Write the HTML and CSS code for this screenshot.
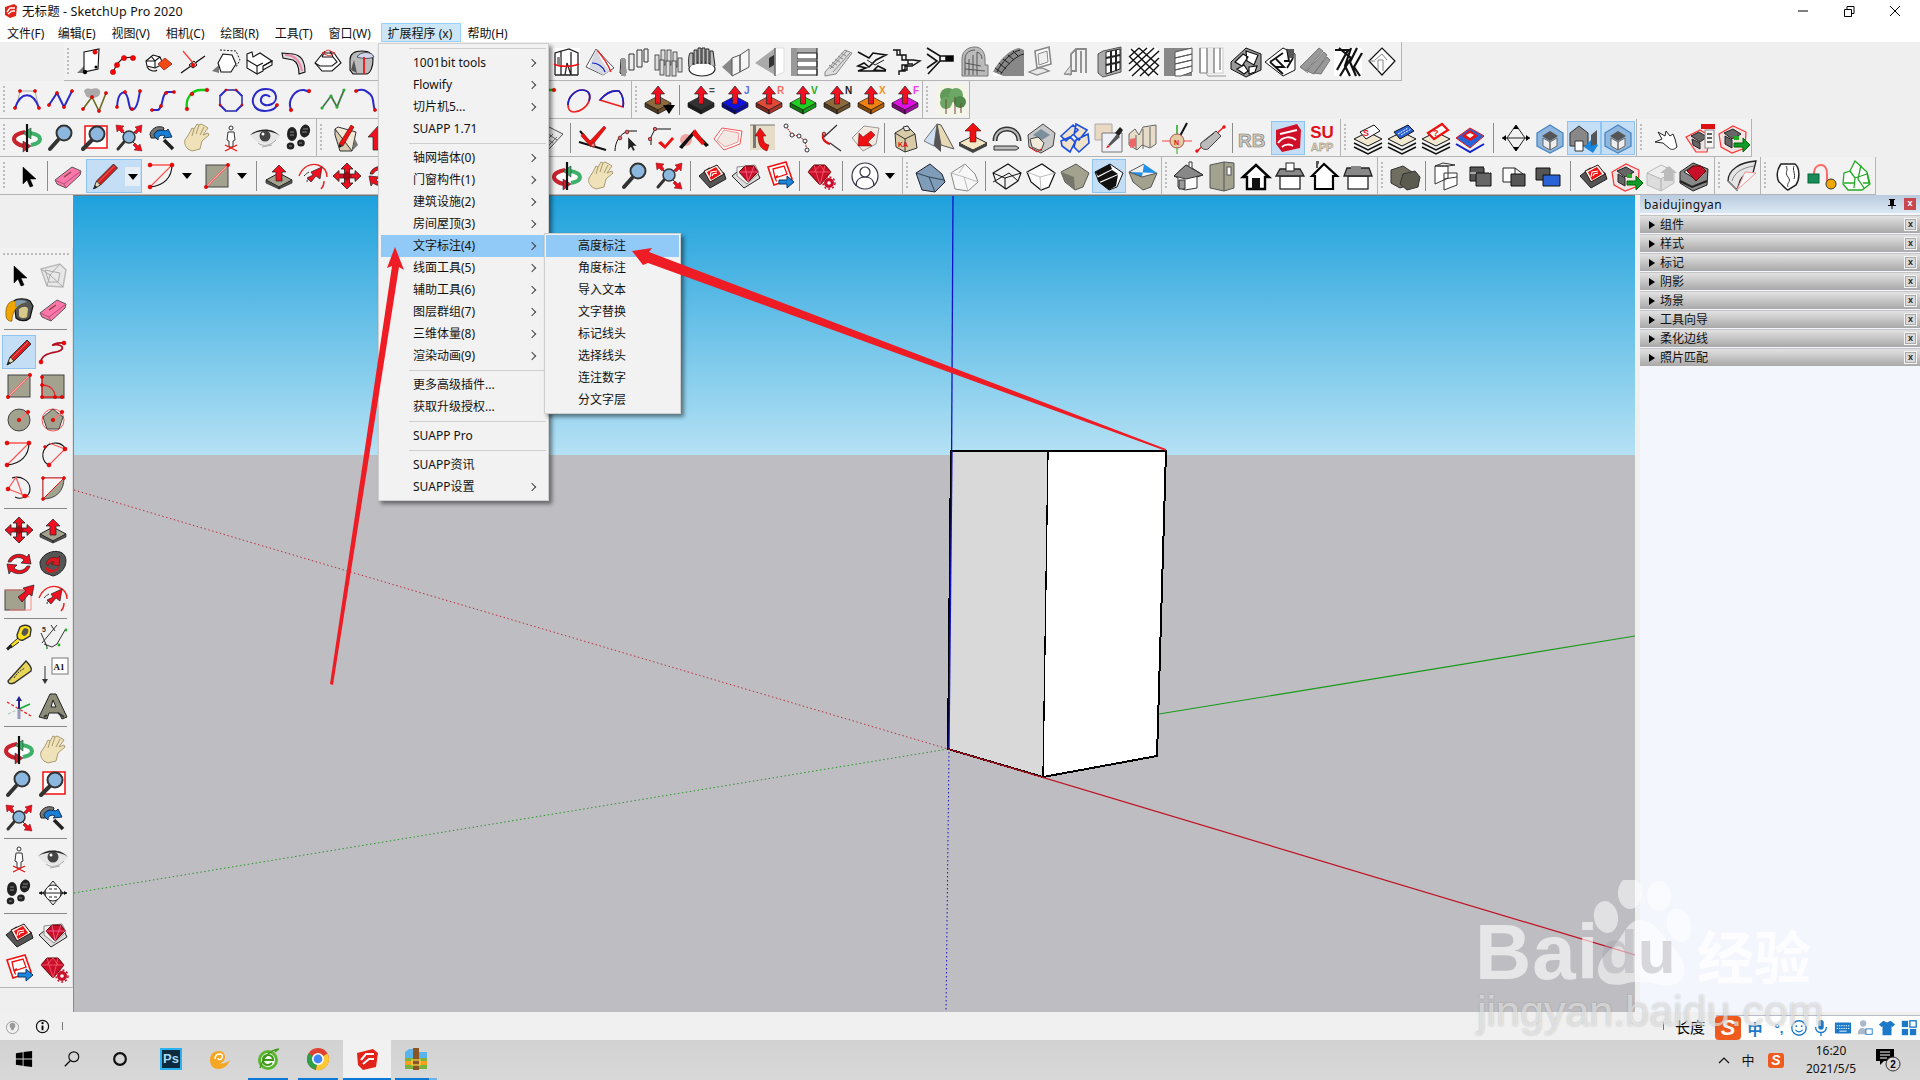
FILE: index.html
```html
<!DOCTYPE html>
<html lang="zh-CN">
<head>
<meta charset="utf-8">
<title>无标题 - SketchUp Pro 2020</title>
<link rel="stylesheet" href="styles.css">
</head>
<body>
<svg class="defs" xmlns="http://www.w3.org/2000/svg">
<!-- row 1 -->
<symbol id="a1" viewBox="0 0 34 34"><path d="M4 28l7-7v7z" fill="#777"/><path d="M11 7l15-3-1 20-14 3z" fill="#fff" class="k"/><circle class="d" cx="22" cy="7" r="2.2"/><circle cx="23" cy="22" r="1.5"/><circle cx="12" cy="27" r="2.2"/></symbol>
<symbol id="a2" viewBox="0 0 34 34"><path d="M6 27l4-8 6-6 10-1" class="k"/><circle class="d" cx="6" cy="27" r="2.6"/><circle class="d" cx="10" cy="20" r="2.6"/><circle class="d" cx="17" cy="13" r="2.6"/><circle class="d" cx="26" cy="13" r="2.6"/></symbol>
<symbol id="a3" viewBox="0 0 34 34"><path d="M5 16l7-6 7 2 3 7-8 4-8-2z" fill="#fff" class="k"/><path d="M10 11l4 5 5-4M5 16l9 0 0 7" class="k"/><path d="M17 19l7-6 7 6-8 6z" fill="#f04a10" stroke="#a33"/><path d="M6 22c2 4 8 5 10 3" class="k"/></symbol>
<symbol id="a4" viewBox="0 0 34 34"><path d="M8 6l10 12" stroke="#f33" stroke-width="1.2"/><path d="M6 28l24-17" stroke="#111" stroke-width="1.3"/><path d="M14 20l5-4 3 4-4 3z" fill="#fff" stroke="#111"/><circle class="d" cx="18" cy="20" r="2"/></symbol>
<symbol id="a5" viewBox="0 0 34 34"><path d="M3 26l7-6v8z" fill="#777"/><path d="M11 5l16 1 4 9-4 7" class="kd"/><path d="M14 9l9 1 4 9-5 8-10 0-3-9z" fill="#fff" class="k"/></symbol>
<symbol id="a6" viewBox="0 0 34 34"><path d="M4 9l5-2 1 5 7-4 12 8-9 5v5l-6 3-10-6z" fill="#fff" class="k"/><path d="M4 15l10 6 6-3M14 21v7M20 21l9-5v4l-9 5" class="k"/></symbol>
<symbol id="a7" viewBox="0 0 34 34"><path d="M5 8l11 1c8 1 12 8 12 18l-6 2c0-7-2-12-6-14L6 13z" fill="#ddd" class="k"/><path d="M8 10c9 0 15 5 17 16" fill="none" stroke="#e8a" stroke-width="2"/></symbol>
<symbol id="a8" viewBox="0 0 34 34"><path d="M4 18l8-10h11l7 10-9 8H11z" fill="#fff" class="k"/><path d="M11 12h11l4 5-5 4H9l-5-3M11 12l3-6M22 12l-3-6" class="k"/><path d="M11 8l6-3 7 3-6 3z" fill="none" stroke="#e33"/></symbol>
<symbol id="a9" viewBox="0 0 34 34"><path d="M5 25V15c0-7 5-9 12-9 8 0 11 4 11 9s-2 14-7 14H8z" fill="#bbb" class="k"/><path d="M12 12c3-6 15-6 17 0-5 2-11 2-17 0z" fill="#cfd6f0" stroke="#555"/><path d="M19 12v17" stroke="#e22" stroke-width="2"/><path d="M9 15l-3 10 6 3z" fill="#555"/></symbol>
<symbol id="b1" viewBox="0 0 34 34"><path d="M6 25L10 8H25L29 25" fill="none" stroke="#aaa"/><path d="M5 25C11 8 23 8 29 25" class="bl"/><circle class="d" cx="5" cy="25" r="1.6"/><circle class="d" cx="10" cy="8" r="1.6"/><circle class="d" cx="25" cy="8" r="1.6"/><circle class="d" cx="29" cy="25" r="1.6"/></symbol>
<symbol id="b2" viewBox="0 0 34 34"><path d="M5 22l8-12 7 14 8-16" class="bl"/><circle class="d" cx="5" cy="22" r="1.6"/><circle class="d" cx="13" cy="10" r="1.6"/><circle class="d" cx="20" cy="24" r="1.6"/><circle class="d" cx="28" cy="8" r="1.6"/></symbol>
<symbol id="b3" viewBox="0 0 34 34"><path d="M6 8c2-4 6-2 8-2 4-2 9 0 8 4 0 6-12 6-14 3z" fill="#aaa"/><path d="M5 26l9-12 7 14 7-18" fill="none" stroke="#6a6a20" stroke-width="1.6"/><circle class="d" cx="5" cy="26" r="1.6"/><circle class="d" cx="14" cy="14" r="1.6"/><circle class="d" cx="21" cy="28" r="1.6"/><circle class="d" cx="28" cy="10" r="1.6"/></symbol>
<symbol id="b4" viewBox="0 0 34 34"><path d="M5 24c1-17 9-18 11-8s2 12 6 10 5-13 6-18" class="bl"/><circle class="d" cx="5" cy="24" r="1.6"/><circle class="d" cx="13" cy="9" r="1.6"/><circle class="d" cx="20" cy="26" r="1.6"/><circle class="d" cx="28" cy="8" r="1.6"/></symbol>
<symbol id="b5" viewBox="0 0 34 34"><path d="M6 27h6c6-3 3-16 9-18h7" class="bl"/><circle class="d" cx="6" cy="27" r="1.6"/><circle class="d" cx="15" cy="23" r="1.6"/><circle class="d" cx="20" cy="10" r="1.6"/><circle class="d" cx="28" cy="9" r="1.6"/></symbol>
<symbol id="b6" viewBox="0 0 34 34"><path d="M7 26C5 15 12 7 21 7h7" fill="none" stroke="#1c1" stroke-width="2.4"/><circle class="d" cx="7" cy="26" r="1.8"/><circle class="d" cx="12" cy="11" r="1.8"/><circle class="d" cx="27" cy="7" r="1.8"/></symbol>
<symbol id="b7" viewBox="0 0 34 34"><path d="M12 7h10l6 6v9l-6 6H12l-6-6v-9z" class="bl"/><path d="M12 7h10M12 28h10M6 13v9M28 13v9" fill="none" stroke="#88a" stroke-width="1"/><circle class="d" cx="12" cy="7" r="1.1"/><circle class="d" cx="22" cy="7" r="1.1"/><circle class="d" cx="6" cy="22" r="1.1"/><circle class="d" cx="28" cy="22" r="1.1"/></symbol>
<symbol id="b8" viewBox="0 0 34 34"><path d="M29 22c-3 7-17 8-22 2S6 6 18 6s12 12 6 15-12 0-11-5 7-5 9-2" class="bl"/><circle class="d" cx="29" cy="22" r="1.6"/></symbol>
<symbol id="b9" viewBox="0 0 34 34"><path d="M9 27C5 17 13 6 22 7l6 2" class="bl"/><circle class="d" cx="9" cy="27" r="1.8"/><circle class="d" cx="27" cy="8" r="1.8"/></symbol>
<symbol id="b10" viewBox="0 0 34 34"><path d="M6 25l9-12 6 11 7-17" fill="none" stroke="#4a8" stroke-width="2"/><path d="M6 25l9-12 6 11 7-17" fill="none" stroke="#640" stroke-width=".8"/><circle cx="6" cy="25" r="1.6" fill="#3a3"/><circle cx="15" cy="13" r="1.6" fill="#3a3"/><circle cx="21" cy="24" r="1.6" fill="#3a3"/><circle cx="28" cy="7" r="1.6" fill="#3a3"/></symbol>
<symbol id="b11" viewBox="0 0 34 34"><path d="M6 8c8-3 10 0 14 3 5 5 2 10 5 16" class="bl"/><circle class="d" cx="6" cy="8" r="1.6"/><circle class="d" cx="25" cy="27" r="1.6"/></symbol>
<symbol id="b12" viewBox="0 0 34 34"><path d="M7 22c0-8 7-15 14-15s9 5 7 11-9 11-15 11c-4 0-6-3-6-7z" fill="none" stroke="#e22" stroke-width="1.7"/><path d="M7 22c0-8 7-15 14-15s9 5 7 11" fill="none" stroke="#12c" stroke-width="1.7"/></symbol>
<symbol id="b13" viewBox="0 0 34 34"><path d="M5 17C10 11 17 7 24 8c4 4 5 11 4 16z" fill="none" stroke="#e22" stroke-width="1.7"/><path d="M5 17C10 11 17 7 24 8c4 4 5 11 4 16" fill="none" stroke="#12c" stroke-width="1.7"/></symbol>
<!-- push pull family -->
<symbol id="ppb" viewBox="0 0 34 34"><path d="M4 20l13-7 13 7-13 7z" fill="currentColor" stroke="#222" stroke-width=".7"/><path d="M4 20v4l13 7v-4zM30 20v4l-13 7v-4z" fill="currentColor" stroke="#222" stroke-width=".7"/><path d="M4 20v4l13 7v-4z" fill="#000" opacity=".45"/><path d="M30 20v4l-13 7v-4z" fill="#000" opacity=".25"/><path d="M14.500 21v-10h-4L17 3l6.500 8h-4v10z" fill="#f01020" stroke="#222" stroke-width=".7"/></symbol>
<symbol id="pt" viewBox="0 0 34 34"><g color="#8d6a3b"><use href="#ppb"/></g><path d="M22 22h12l-6 9z"/></symbol>
<symbol id="p0" viewBox="0 0 34 34"><g color="#333"><use href="#ppb"/></g><text x="25" y="11" class="tl" fill="#444">=</text></symbol>
<symbol id="pj" viewBox="0 0 34 34"><g color="#1010e0"><use href="#ppb"/></g><text x="26" y="11" class="tl" fill="#5a6cf0">J</text></symbol>
<symbol id="pr" viewBox="0 0 34 34"><g color="#e04838"><use href="#ppb"/></g><text x="25" y="11" class="tl" fill="#f07060">R</text></symbol>
<symbol id="pv" viewBox="0 0 34 34"><g color="#20d020"><use href="#ppb"/></g><text x="25" y="11" class="tl" fill="#22aa22">V</text></symbol>
<symbol id="pn" viewBox="0 0 34 34"><g color="#8d6a3b"><use href="#ppb"/></g><text x="25" y="11" class="tl" fill="#222">N</text></symbol>
<symbol id="px" viewBox="0 0 34 34"><g color="#f08010"><use href="#ppb"/></g><text x="25" y="11" class="tl" fill="#f09020">X</text></symbol>
<symbol id="pf" viewBox="0 0 34 34"><g color="#e010e0"><use href="#ppb"/></g><text x="25" y="11" class="tl" fill="#f040f0">F</text></symbol>
<symbol id="tr" viewBox="0 0 34 34"><rect x="1" y="1" width="32" height="32" fill="#f4f4e8"/><circle cx="13" cy="13" r="8" fill="#5f9a58"/><circle cx="21" cy="12" r="7" fill="#6da765"/><circle cx="25" cy="19" r="6" fill="#4f8a4a"/><circle cx="11" cy="20" r="6" fill="#6da765"/><path d="M11 31V16M20 31V14M26 30V20" stroke="#6b4a30"/></symbol>
<!-- common tools -->
<symbol id="sel" viewBox="0 0 34 34"><path d="M12 8v17l4-4 3 7 3-1-3-7h6z" stroke="#000" stroke-width=".5"/></symbol>
<symbol id="era" viewBox="0 0 34 34"><path d="M4 21L21 8l9 4-1 4-14 13-9-4z" fill="#f7a" stroke="#555"/><path d="M4 21l9 4 17-13M13 25l2 4" fill="none" stroke="#a57"/><path d="M13 18l7-5" stroke="#844" stroke-width="1.5"/></symbol>
<symbol id="pen" viewBox="0 0 34 34"><path d="M25 5l4 4-17 17-4-4z" fill="#d81e1e" stroke="#333"/><path d="M8 22l-3 8 7-4z" fill="#e8d9b0" stroke="#333"/><path d="M5 30l1.500-4 2.500 2.500z" fill="#222"/><path d="M9 24L26 7" stroke="#fff" opacity=".35"/></symbol>
<symbol id="ar" viewBox="0 0 34 34"><path d="M5 6h22L5 28" fill="none" stroke="#f55" stroke-width="1.3"/><path d="M27 6c0 12-8 21-22 22" class="k"/><circle class="d" cx="5" cy="6" r="2"/><circle class="d" cx="27" cy="6" r="2"/><circle class="d" cx="5" cy="28" r="2"/></symbol>
<symbol id="re" viewBox="0 0 34 34"><rect x="6" y="6" width="22" height="22" class="tan"/><path d="M6 28L28 6" stroke="#f66" stroke-width="1.800"/><path d="M6 28L28 6" stroke="#fdd" stroke-width=".6"/><circle class="d" cx="6" cy="28" r="1.700"/><circle class="d" cx="28" cy="6" r="1.700"/></symbol>
<symbol id="pp" viewBox="0 0 34 34"><path d="M4 21l13-7 13 7-13 7z" fill="#a3a28f" stroke="#222"/><path d="M4 21v3l13 6v-2zM30 21v3l-13 6v-2z" fill="#555" stroke="#222" stroke-width=".7"/><path d="M14 22v-9h-4l7-7 7 7h-4v9z" fill="#f01020" stroke="#222" stroke-width=".7"/></symbol>
<symbol id="fo" viewBox="0 0 34 34"><path d="M3 17C7 7 15 4 22 6c6 2 9 7 9 12" fill="none" stroke="#e22" stroke-width="1.400"/><path d="M28 22c0 3-1 6-3 8" fill="none" stroke="#e22" stroke-width="1.400"/><path d="M11 19l6-3-2-3 11-5-2 12-4-3-5 6z" fill="#f01020" stroke="#222" stroke-width=".7"/><path d="M8 17c2-2 3-3 5-4M11 23c0-2 1-3 2-3" fill="none" stroke="#333"/></symbol>
<symbol id="mo" viewBox="0 0 34 34"><path d="M17 4l6 6h-3.500v5H25v-3.500l6 5.500-6 5.500V19h-5.500v5H23l-6 6-6-6h3.500v-5H9v3.500L3 17l6-5.500V15h5.500v-5H11z" fill="#ec1020" stroke="#222" stroke-width=".8"/><path d="M17 12l5 5-5 5-5-5z" fill="#400" opacity=".45"/></symbol>
<symbol id="ro" viewBox="0 0 34 34"><g id="ro1"><path d="M6 15C8 7 19 5 25 10l2-3 2 10-10-1 3-3c-4-4-10-3-13 2z" fill="#ec1020" stroke="#222" stroke-width=".7"/></g><use href="#ro1" transform="rotate(180 17 17)"/></symbol>
<symbol id="sc" viewBox="0 0 34 34"><rect x="3" y="9" width="20" height="20" class="tan"/><path d="M3 9h20v2M29 13v16H8" fill="none" stroke="#f88"/><path d="M16 16l8-6-3-3 11-3-2 11-3-2-7 8z" fill="#ec1020" stroke="#222" stroke-width=".7"/></symbol>
<symbol id="ob" viewBox="0 0 34 34"><ellipse cx="17" cy="17" rx="10" ry="6" fill="#fff"/><path d="M15 11C8 12 4 15 4 18s4 6 10 7" fill="none" stroke="#c8222c" stroke-width="4"/><path d="M13 20l8 5-8 6z" fill="#c8222c" stroke="#222" stroke-width=".5"/><path d="M20 12c6 1 10 3 10 6 0 3-3 5-9 6" fill="none" stroke="#3fb06a" stroke-width="4"/><path d="M21 7l-8 5 8 6z" fill="#3fb06a" stroke="#222" stroke-width=".5"/><path d="M17 3v28" stroke="#111" stroke-width="2.200"/></symbol>
<symbol id="ha" viewBox="0 0 34 34"><path d="M8 28c-3-3-4-6-3-9l4-6 3-6 2 1 3-5 2 1 2-1 4 2 3 2-5 7 5-2 1 2-7 6-2 8-8 2z" fill="#f0e2b8" stroke="#a99a70"/><path d="M14 8l-2 7M19 4l-3 9M24 6l-4 8" stroke="#a99a70"/></symbol>
<symbol id="zo" viewBox="0 0 34 34"><path d="M14 19L6 28" stroke="#333" stroke-width="4" stroke-linecap="round"/><circle cx="20" cy="12" r="7.500" fill="#8cb8e0" stroke="#333" stroke-width="2"/></symbol>
<symbol id="zw" viewBox="0 0 34 34"><rect x="7" y="5" width="22" height="22" fill="#fff" stroke="#e11" stroke-width="1.500"/><path d="M14 19L5 28" stroke="#333" stroke-width="4" stroke-linecap="round"/><circle cx="19" cy="13" r="7.500" fill="#8cb8e0" stroke="#333" stroke-width="2"/></symbol>
<symbol id="ze" viewBox="0 0 34 34"><path d="M12 21L6 28" stroke="#333" stroke-width="3" stroke-linecap="round"/><path d="M6 6l8 8M28 6l-8 8M28 28l-8-8" stroke="#333"/><circle cx="17" cy="16" r="6" fill="#8cb8e0" stroke="#333" stroke-width="1.500"/><path d="M4 4l8 1-2 2 2 3-2 2-3-3-2 2zM30 4l-1 8-2-2-3 3-2-2 3-3-2-2zM30 30l-8-1 2-2-3-3 2-2 3 3 2-2z" fill="#ec1020" stroke="#711" stroke-width=".5"/></symbol>
<symbol id="zp" viewBox="0 0 34 34"><path d="M4 13c2-7 10-9 14-6l-1 3c-4-2-8 0-9 4l3 3-6 0z" fill="#777" stroke="#222"/><path d="M8 15c0-5 6-7 12-5l2-2 4 8-9 1 2-2c-4-2-7 0-7 4z" fill="#1b7fd8" stroke="#135"/><path d="M18 19l9 9" stroke="#222" stroke-width="3.500"/></symbol>
<symbol id="pe" viewBox="0 0 34 34"><circle cx="17" cy="7" r="2" fill="#fff" stroke="#333"/><path d="M14 11h6l1 8-2 1v6h-4v-6l-2-1z" fill="#fff" stroke="#333"/><path d="M11 24l12 6M23 24l-12 6" stroke="#e11" stroke-width="1.200"/></symbol>
<symbol id="ey" viewBox="0 0 34 34"><path d="M2 14C10 6 24 6 32 15c-6 8-14 10-22 6-3-1-6-4-8-7z" fill="#e6e6e6"/><path d="M2 14C10 7 24 6 32 15c-8-6-20-6-30-1z" fill="#222"/><circle cx="17" cy="15" r="5.500" fill="#444"/><circle cx="15" cy="13" r="1.500" fill="#fff"/><path d="M10 22c5 4 12 3 18-3M14 26l10-2" stroke="#aaa" fill="none"/></symbol>
<symbol id="fe" viewBox="0 0 34 34"><ellipse cx="10" cy="13" rx="5" ry="7" fill="#222"/><ellipse cx="8.500" cy="25" rx="3.800" ry="3.500" fill="#222"/><ellipse cx="23" cy="10" rx="5" ry="6.500" transform="rotate(15 23 10)" fill="#222"/><ellipse cx="19" cy="22" rx="3.800" ry="3.500" fill="#222"/><path d="M8 11h4M8 14h4M21 8h5M20 11h5M7 25h3M17 22h3" stroke="#888"/></symbol>
<!-- left extras -->
<symbol id="gh" viewBox="0 0 34 34"><path d="M5 11l19-5 6 6-3 17-16-1z" fill="#e8e8e8" stroke="#bbb" stroke-width="1.500"/><path d="M11 28l3-11 13 12M14 17L5 11M14 17l10-11M9 12l15 3-2 9-9 0z" fill="none" stroke="#aaa"/></symbol>
<symbol id="pa" viewBox="0 0 34 34"><path d="M12 9c3-3 12-3 16 0l3 5-3 12c-4 4-11 3-14 0z" fill="#555" stroke="#111" stroke-width="1.200"/><path d="M17 17c4-3 8-3 9 0l-1 8c-3 2-7 1-8-1z" fill="#d6c98a"/><path d="M12 9C7 9 3 14 4 24c0 3 3 6 6 5 0-7 3-15 13-19z" fill="#f0a500" stroke="#640" stroke-width=".6"/><path d="M13 9c4-2 10-1 12 1-5 1-9 3-12 6z" fill="#7c9db2"/></symbol>
<symbol id="fr" viewBox="0 0 34 34"><path d="M5 27c0-6 6-8 10-9s9-1 11-4-4-5-8-4 2-3 9-2" fill="none" stroke="#b01020" stroke-width="1.800"/><circle class="d" cx="5" cy="27" r="2"/><circle class="d" cx="28" cy="8" r="2"/></symbol>
<symbol id="rr" viewBox="0 0 34 34"><rect x="6" y="6" width="22" height="23" class="tan"/><path d="M6 8v20h20M6 16c8 0 13 5 13 12" fill="none" stroke="#e22" stroke-width="1.300"/><circle class="d" cx="6" cy="8" r="1.600"/><circle class="d" cx="6" cy="16" r="1.600"/><circle class="d" cx="6" cy="28" r="1.600"/><circle class="d" cx="19" cy="28" r="1.600"/><circle class="d" cx="26" cy="28" r="1.600"/></symbol>
<symbol id="ci" viewBox="0 0 34 34"><circle cx="17" cy="17" r="11" class="tan"/><path d="M17 17l9-8" stroke="#f77" stroke-width="1.500"/><circle class="d" cx="17" cy="17" r="1.800"/><circle class="d" cx="26" cy="9" r="1.800"/></symbol>
<symbol id="po" viewBox="0 0 34 34"><circle cx="17" cy="17" r="11" fill="none" stroke="#f55"/><path d="M17 6l10 8-4 12H11L7 14z" class="tan"/><path d="M17 17l9-8" stroke="#f77" stroke-width="1.500"/><circle class="d" cx="17" cy="17" r="1.800"/><circle class="d" cx="26" cy="9" r="1.800"/></symbol>
<symbol id="a2s" viewBox="0 0 34 34"><path d="M13 28c-7-3-9-13-1-20 5-3 13-3 17 3" class="k"/><path d="M13 28L29 12 13 6" fill="none" stroke="#f55" stroke-width="1.200"/><circle class="d" cx="13" cy="28" r="2"/><circle class="d" cx="29" cy="12" r="2"/><circle class="d" cx="9" cy="10" r="1.400"/></symbol>
<symbol id="a3s" viewBox="0 0 34 34"><path d="M10 7c9-3 18 3 18 11s-9 11-15 8" class="k"/><path d="M6 18l21 8M6 18L14 6M14 6l7 20" fill="none" stroke="#f55" stroke-width="1.200"/><circle class="d" cx="6" cy="18" r="2"/><circle class="d" cx="23" cy="25" r="2"/></symbol>
<symbol id="pi" viewBox="0 0 34 34"><path d="M7 7h21c0 13-8 21-21 21z" class="tan"/><path d="M7 28L28 7H7z" fill="#f5f5f5" stroke="#e22"/><circle class="d" cx="7" cy="7" r="1.500"/><circle class="d" cx="28" cy="7" r="1.500"/><circle class="d" cx="7" cy="28" r="1.500"/></symbol>
<symbol id="of" viewBox="0 0 34 34"><path d="M4 15C7 6 17 3 24 5c6 2 7 8 5 14-2 5-7 9-12 10l-5-2c-5-1-8-5-8-12z" fill="#555" stroke="#222"/><path d="M10 17c1-5 6-8 11-6l3-2-1 10-8-2 3-2c-3-1-5 1-6 4z" fill="#d61a20" stroke="#411" stroke-width=".5"/><path d="M12 25c-2-1-3-3-2-5l7 3c2 0 3-1 5-3l1 1c-2 3-7 6-11 4z" fill="#d61a20"/></symbol>
<symbol id="ta" viewBox="0 0 34 34"><path d="M18 6c4-3 11-2 11 3l-1 6-7 4c-4 1-6-2-6-5z" fill="#ffe11a" stroke="#333" stroke-width="1.400"/><ellipse cx="23" cy="11" rx="3" ry="4" transform="rotate(30 23 11)" fill="#555"/><path d="M16 17L7 25l2 2 8-6" fill="#ffe11a" stroke="#222"/><rect x="4" y="25" width="6" height="3" fill="#222" transform="rotate(-40 7 26)"/></symbol>
<symbol id="cn" viewBox="0 0 34 34"><path d="M15 4l4 6M21 4L6 22M5 12l4 9 2 5M8 23l8 3 5-3 8-14" fill="none" stroke="#333"/><text x="6" y="11" class="ts" fill="#333">5</text><circle cx="11" cy="27" r="1" fill="#2a2"/><circle cx="30" cy="9" r="1.400" fill="#2a2"/><circle cx="23" cy="24" r="1.400" fill="#2a2"/></symbol>
<symbol id="pc" viewBox="0 0 34 34"><path d="M6 26L24 6c5 5 6 8 5 10L12 28c-3 1-6 1-6-2z" fill="#e8d65a" stroke="#333" stroke-width="1.400"/><path d="M12 23c3-5 7-8 11-10" stroke="#333" stroke-dasharray="2 1" fill="none"/></symbol>
<symbol id="tx" viewBox="0 0 34 34"><rect x="16" y="3" width="16" height="16" fill="#fff" stroke="#777"/><text x="17.500" y="15" class="tx2" fill="#111">A1</text><path d="M9 11v13" stroke="#333"/><path d="M6 24h6l-3 5z" fill="#333"/></symbol>
<symbol id="ax" viewBox="0 0 34 34"><path d="M5 13l24 14" stroke="#e22" stroke-dasharray="3 2" stroke-width="1.300"/><path d="M17 20l11-5" stroke="#1a3" stroke-width="1.500"/><path d="M6 25l11-5" stroke="#9c9" stroke-dasharray="3 2"/><path d="M17 20V9" stroke="#229" stroke-width="2"/><path d="M14 12l3-5 3 5z" fill="#229"/><path d="M17 21v9" stroke="#99b" stroke-width="3"/></symbol>
<symbol id="t3" viewBox="0 0 34 34"><path d="M3 28L14 5h6l11 23-5 2-3-6H13l-2 6z" fill="#8c8c78" stroke="#222"/><path d="M15 18l2-7 3 7z" fill="#eee" stroke="#222"/><path d="M8 28l3-2M22 24l6 4" stroke="#333" stroke-width="2"/></symbol>
<symbol id="pos" viewBox="0 0 34 34"><path d="M3 17h28M17 5L27 17 17 29 7 17z" fill="none" stroke="#222"/><circle cx="17" cy="17" r="8" fill="#fff" stroke="#222"/><path d="M3 17l3-2v4zM31 17l-3-2v4z"/><path d="M13 13h3M18 13h3M13 21h3M18 21h3M3 17h28" stroke="#222"/></symbol>
<symbol id="w1" viewBox="0 0 34 34"><path d="M4 17L14 9l15 5 2 6-16 9z" fill="#555" stroke="#222"/><path d="M9 12l13-6 7 9-14 8z" fill="#f7f1e8" stroke="#311"/><path d="M12 13l9-5 5 7-10 6z" fill="#e11"/><path d="M15 18l1-5 6-1M17 17l1-2 4-1" stroke="#fff" stroke-width="1.200" fill="none"/></symbol>
<symbol id="w2" viewBox="0 0 34 34"><path d="M3 17L13 9l15 4 3 6-16 10z" fill="#ddd" stroke="#222"/><path d="M8 8l18-2 4 8-12 11-10-8z" fill="#f0f0f0" stroke="#888"/><path d="M10 13l6-6h9l4 6-10 10z" fill="#c9102a" stroke="#600"/><path d="M10 13h19M16 7l3 16M25 7l-6 16" stroke="#f7a" stroke-width=".7"/></symbol>
<symbol id="w3" viewBox="0 0 34 34"><path d="M5 8l18-5 6 17-18 6z" fill="#fff" stroke="#e11" stroke-width="1.600"/><path d="M10 10l11-3 3 8-12 4zM14 22c-2 0-2-5 1-5" fill="none" stroke="#e11" stroke-width="1.300"/><path d="M16 21h8v-4l7 6-7 6v-4h-8z" fill="#1b87dc" stroke="#136"/></symbol>
<symbol id="w4" viewBox="0 0 34 34"><path d="M5 13l6-7h11l6 7-11 13z" fill="#c9102a" stroke="#500"/><path d="M5 13h23M11 6l6 20M22 6l-5 20M11 13l6-7 5 7" stroke="#f67" stroke-width=".7" fill="none"/><circle cx="26" cy="24" r="5" fill="#c9102a"/><circle cx="26" cy="24" r="1.800" fill="#fff"/><circle cx="26" cy="24" r="6" fill="none" stroke="#c9102a" stroke-width="1.500" stroke-dasharray="2 2"/></symbol>
<!-- row 1 architecture -->
<symbol id="c1" viewBox="0 0 34 34"><rect x="4" y="3" width="27" height="28" fill="#fff"/><path d="M6 30V8l14-4 9 4v22M12 30V6M22 30V7M6 8l6-2M6 30h23M16 30l2-12 4 12" fill="none" stroke="#222" stroke-width="1.300"/><path d="M5 19c5 3 18 3 25 0" fill="none" stroke="#e11" stroke-width="1.600"/><path d="M8 12h4v8H8z" fill="#888"/></symbol>
<symbol id="c2" viewBox="0 0 34 34"><path d="M3 22L13 4l18 19-11 7z" fill="#fff" stroke="#555"/><path d="M13 4c3 6 6 14 14 22l-7 4L6 22z" fill="#d5d8e0"/><path d="M9 18c5 0 11 3 13 9" fill="none" stroke="#12c" stroke-width="1.200"/><path d="M14 5c5 6 11 14 14 22" fill="none" stroke="#e22" stroke-width="1.300"/></symbol>
<symbol id="c3" viewBox="0 0 34 34"><path d="M3 28h6l-1-14H4zM3 28l5 3M12 25h5V9h-5zM20 22h5V5h-5zM27 17h4V4h-4z" fill="#eee" stroke="#333"/><path d="M4 14h5v17H4z" fill="#999"/></symbol>
<symbol id="c4" viewBox="0 0 34 34"><g fill="#ddd" stroke="#333" stroke-width=".8"><rect x="4" y="10" width="4" height="15"/><rect x="10" y="5" width="4" height="15"/><rect x="16" y="5" width="4" height="15"/><rect x="22" y="7" width="4" height="15"/><rect x="27" y="13" width="4" height="14"/><rect x="9" y="15" width="4" height="15"/><rect x="15" y="16" width="4" height="15"/><rect x="21" y="16" width="4" height="15"/></g></symbol>
<symbol id="c5" viewBox="0 0 34 34"><ellipse cx="17" cy="24" rx="13" ry="7" fill="#fff" stroke="#222" stroke-width="1.200"/><path d="M4 22C3 16 4 9 5 8h3l0 12M9 20V5h3v14M13 19V3h3v16M17 19V3h3v16M21 19V4h3v15M25 20V6h3l2 15" fill="#bbb" stroke="#222"/></symbol>
<symbol id="c6" viewBox="0 0 34 34"><path d="M3 22l10-9v18z" fill="#888"/><path d="M13 13l8-3v17l-8 4zM21 10l9-6v18l-9 5z" fill="#f5f5f5" stroke="#555"/></symbol>
<symbol id="c7" viewBox="0 0 34 34"><path d="M2 18L22 3v27z" fill="#aaa"/><path d="M22 3h9v24l-9 4z" fill="#fff" stroke="#ddd"/><path d="M16 13l5-3v10l-5 3z" fill="#333"/><path d="M22 3v28" stroke="#333"/></symbol>
<symbol id="c8" viewBox="0 0 34 34"><path d="M4 3h26v7l-6 3H4z" fill="#aaa"/><path d="M10 8h20v6H10zM10 16h20v6H10zM10 24h20v6H10z" fill="#fff" stroke="#222"/><path d="M4 3h6v28H4z" fill="#999"/><path d="M30 3v28" stroke="#222"/></symbol>
<symbol id="c9" viewBox="0 0 34 34"><path d="M4 27L24 5l7 3-16 21-11 2z" fill="#ddd" stroke="#888"/><path d="M9 24L26 6M12 27L29 8M8 20l5 3M11 17l5 3M14 14l5 3M17 11l5 3M20 8l5 3" stroke="#888"/></symbol>
<symbol id="c10" viewBox="0 0 34 34"><path d="M3 7l11 6 4-5 13 2-10 5-7 7-5-4-6 3 8 2-8 3h28l-12-1 4-4 8 4" fill="none" stroke="#111" stroke-width="1.600"/><path d="M12 15l8 5 9-5" fill="none" stroke="#222"/></symbol>
<symbol id="c11" viewBox="0 0 34 34"><path d="M4 5h7v5h6v5h7l7 1-8 5h-7v5h-6v4M8 5v5h5v5h6v4h5M13 20h5v5h-5z" fill="none" stroke="#111" stroke-width="1.400"/></symbol>
<symbol id="c12" viewBox="0 0 34 34"><path d="M4 3l13 8h13v5H17L5 29M4 9l10 7-10 7M17 11v5h6v-5z" fill="none" stroke="#111" stroke-width="1.600"/><path d="M23 11h7v5h-7z"/></symbol>
<symbol id="c13" viewBox="0 0 34 34"><path d="M5 31V14C5 6 11 2 18 2s10 6 10 12v6h3v11z" fill="#bbb" stroke="#777"/><path d="M8 30V14c0-7 6-9 10-9M12 30V14M16 30V10M20 30V7M25 14c0-4-2-6-5-7M8 18l16 3M8 24l20 2" fill="none" stroke="#555"/></symbol>
<symbol id="c14" viewBox="0 0 34 34"><path d="M2 27C6 18 18 4 28 3l5 2v26H12z" fill="#888"/><path d="M6 27C10 18 20 7 29 5M10 29C14 22 24 11 33 9M4 23l7 5M8 18l7 6M12 14l7 5M17 10l6 5M22 6l5 5" fill="none" stroke="#222"/><path d="M2 27l10 4H2z" fill="#fff"/></symbol>
<symbol id="c15" viewBox="0 0 34 34"><path d="M10 6l14-4 2 17-14 4z" fill="#fff" stroke="#888" stroke-width="1.600"/><path d="M13 9l9-3 1 11-9 3z" fill="#eee" stroke="#888"/><path d="M4 27l10-4h3l7 3-12 4z" fill="#e8e8e8" stroke="#888" stroke-width="1.300"/></symbol>
<symbol id="c16" viewBox="0 0 34 34"><path d="M12 30V9l5-5 10 0v24M17 4v22h-5M22 6v22" fill="none" stroke="#888" stroke-width="1.800"/><path d="M5 29l7-9v10zM5 29h7" fill="#ddd" stroke="#888"/></symbol>
<symbol id="c17" viewBox="0 0 34 34"><path d="M10 6l18-4v25l-18 5-5-4V9z" fill="#aaa" stroke="#555"/><path d="M13 7l14-3v20l-14 5z" fill="#fff" stroke="#222"/><path d="M13 13l14-3M13 20l14-3M18 6v22M23 5v21" stroke="#222" stroke-width="2"/></symbol>
<symbol id="c18" viewBox="0 0 34 34"><rect x="2" y="3" width="30" height="28" fill="#fff"/><path d="M2 12L12 3M2 19L20 3M2 26L27 3M5 31L32 6M13 31L32 13M21 31L32 20M4 4l27 26M2 11l20 20M12 3l20 18" stroke="#111" stroke-width="1.400"/></symbol>
<symbol id="c19" viewBox="0 0 34 34"><rect x="3" y="3" width="28" height="28" fill="#888"/><path d="M14 7l17-4v6l-17 4zM14 13l17-4v6l-17 4zM14 19l17-4v6l-17 4zM14 25l17-4v6l-11 4h-6z" fill="#fff" stroke="#555"/></symbol>
<symbol id="c20" viewBox="0 0 34 34"><rect x="5" y="3" width="23" height="25" fill="#fff" stroke="#ccc"/><path d="M12 3h7v25h-7z" fill="#eee"/><path d="M5 3v25M12 3v25M19 3v25M25 3v22" stroke="#555"/><path d="M5 28h6l2 3h18" fill="none" stroke="#999"/></symbol>
<symbol id="c21" viewBox="0 0 34 34"><path d="M2 17L17 3l15 6v16L17 32 2 24z" fill="#999" stroke="#111"/><path d="M6 17l8-8 5 3-6 9zM17 6l12 4-4 10-7-4zM8 24l7-4 4 6-4 3zM20 22l8-1-2 6-6 2z" fill="#fff" stroke="#111" stroke-width="1.200"/></symbol>
<symbol id="c22" viewBox="0 0 34 34"><path d="M2 17L20 3l12 6v16L20 31z" fill="#fff" stroke="#111"/><path d="M7 17L20 8M7 17l13 12M13 14l8 8-8 0M24 4l2 12-5 0M24 23l6-10" fill="none" stroke="#111" stroke-width="1.800"/><path d="M24 4h7v9h-5z" fill="#555"/></symbol>
<symbol id="c23" viewBox="0 0 34 34"><path d="M3 22L22 3l4 3-17 20zM10 26L27 7l3 3-13 19zM17 28L30 12l3 3-9 14z" fill="#999" stroke="#777"/><path d="M3 22l8 6" stroke="#888"/></symbol>
<symbol id="c24" viewBox="0 0 34 34"><rect x="3" y="3" width="28" height="28" fill="#fff"/><path d="M4 5h13L6 25M8 3l12 10L9 31M20 3l-6 18 5 10M26 3l-7 14 6 14M31 8l-8 14 6 9" fill="none" stroke="#111" stroke-width="2.200"/></symbol>
<symbol id="c25" viewBox="0 0 34 34"><path d="M4 16L17 3l13 13-13 14z" fill="#fff" stroke="#111" stroke-width="1.200"/><path d="M10 15l7-6 5 6M13 26V15h5v11M4 16h6" fill="none" stroke="#888"/></symbol>
<!-- row 3 -->
<symbol id="d1" viewBox="0 0 34 34"><path d="M7 8l14 16 3 6H12L7 14z" fill="#d8cbb2" stroke="#333"/><path d="M7 8l3-2 18 5-4 19z" fill="#f1e9d8" stroke="#333"/><path d="M11 23L23 4l3 2-11 19z" fill="#e11" stroke="#511" stroke-width=".6"/><path d="M11 23l0 4 4-2z" fill="#222"/><path d="M24 30l6-6-3-6z" fill="#777"/></symbol>
<symbol id="d2" viewBox="0 0 34 34"><path d="M11 29V16H6l11-12 9 12h-4v13z" fill="#f01020" stroke="#222" stroke-width=".7"/></symbol>
<symbol id="d3" viewBox="0 0 34 34"><path d="M3 19L17 6l14 7-14 15z" fill="#e8e8e8" stroke="#555"/><path d="M8 19l9-9M12 22l9-9M16 25l9-9M8 13l13 9M12 10l13 9" stroke="#666"/></symbol>
<symbol id="d4" viewBox="0 0 34 34"><path d="M5 10l11 13M4 21l27 8" stroke="#111" stroke-width="2"/><path d="M8 12l7 8L29 5l2 2-15 19-10-11z" fill="#e11" stroke="#811" stroke-width=".5"/><circle cx="18" cy="24" r="2" fill="#e88" stroke="#822"/></symbol>
<symbol id="d5" viewBox="0 0 34 34"><path d="M6 30c0-9 5-18 14-20h8" fill="none" stroke="#111"/><circle cx="11" cy="17" r="1.800" fill="#e66" stroke="#733"/><circle cx="18" cy="11" r="1.800" fill="#e66" stroke="#733"/><path d="M19 16v13l3-3 2 4 2-1-2-4h4z" fill="#222" stroke="#eee" stroke-width=".4"/></symbol>
<symbol id="d6" viewBox="0 0 34 34"><path d="M8 24v-8l4-8h16" fill="none" stroke="#111"/><circle cx="7" cy="18" r="1.700" fill="#e66" stroke="#733"/><circle cx="12" cy="8" r="1.700" fill="#e66" stroke="#733"/><path d="M15 22l3-2 4 4 7-8 2 2-9 10z" fill="#e11"/></symbol>
<symbol id="d7" viewBox="0 0 34 34"><circle cx="9" cy="19" r="6" fill="#e66" opacity=".55"/><path d="M2 26L17 9l15 15-3 2L17 14 5 28z" fill="#111"/><path d="M15 13l3-5 10 14-3 2z" fill="#e11"/></symbol>
<symbol id="d8" viewBox="0 0 34 34"><path d="M3 18L11 7l20 3-2 13-16 6z" fill="#fff" stroke="#e55"/><path d="M6 19L13 9l15 3-1 9-13 5z" fill="#f3e9e4" stroke="#e99"/></symbol>
<symbol id="d9" viewBox="0 0 34 34"><rect x="5" y="4" width="25" height="25" fill="#e5ddc8"/><path d="M5 4h25" stroke="#777"/><path d="M8 4l3 0v23H8z" fill="#777"/><path d="M15 7l6 8h-3c0 6 2 8 6 9l-2 6c-7-2-9-8-9-15h-3z" fill="#e11" stroke="#511" stroke-width=".5"/></symbol>
<symbol id="d10" viewBox="0 0 34 34"><path d="M7 5l6 9 7 1 6 5 2 10" fill="none" stroke="#b11" stroke-dasharray="2 1"/><circle cx="7" cy="5" r="2" fill="#fff" stroke="#333"/><circle cx="13" cy="14" r="2" fill="#fff" stroke="#333"/><circle cx="20" cy="15" r="2" fill="#fff" stroke="#333"/><circle cx="26" cy="20" r="2" fill="#fff" stroke="#333"/><circle cx="28" cy="29" r="2" fill="#fff" stroke="#333"/></symbol>
<symbol id="d11" viewBox="0 0 34 34"><path d="M24 4L11 16M17 22l11 8" stroke="#333" stroke-width="1.200"/><path d="M11 12c-3 5 0 9 6 11" fill="none" stroke="#d11" stroke-width="2"/><circle cx="11" cy="13" r="1.800" fill="#e66" stroke="#733"/></symbol>
<symbol id="d12" viewBox="0 0 34 34"><path d="M5 17L17 5l15 2-3 16-13 7z" fill="#f3e9e0" stroke="#999"/><path d="M24 10l4 4-7 7 4 4H11l1-13 4 4z" fill="#e11" stroke="#611" stroke-width=".5"/></symbol>
<symbol id="d13" viewBox="0 0 34 34"><path d="M7 12l12-7 8 8 2 14-12 4-9-5z" fill="#d8cba8" stroke="#333"/><path d="M7 12l10 6 10-5M17 18l0 13" stroke="#333" fill="none"/><path d="M15 6l5-1 2 4-5 1z" fill="#eee" stroke="#333"/><text x="10" y="26" class="ts" fill="#d11">KA</text></symbol>
<symbol id="d14" viewBox="0 0 34 34"><path d="M2 20L15 3l-3 22z" fill="#cfe0f0" stroke="#777"/><path d="M15 3l4 1 13 24-13-4z" fill="#e8d9b6" stroke="#555"/><path d="M15 3l-3 22 7 6 0-7z" fill="#555"/></symbol>
<symbol id="d15" viewBox="0 0 34 34"><path d="M3 22l14-7 14 7-14 7z" fill="#f6e7c5" stroke="#222"/><path d="M3 22v3l14 7 14-7v-3l-14 7z" fill="#444"/><path d="M14 21V10H9l8-8 8 8h-5v11z" fill="#e11" stroke="#511" stroke-width=".6"/></symbol>
<symbol id="d16" viewBox="0 0 34 34"><path d="M5 20c0-16 24-16 24 0" fill="none" stroke="#333" stroke-width="5"/><path d="M5 20c0-16 24-16 24 0" fill="none" stroke="#bbb" stroke-width="2"/><path d="M4 25h22l3 2-3 2H4z" fill="#bbb" stroke="#333"/></symbol>
<symbol id="d17" viewBox="0 0 34 34"><path d="M4 14L19 3l12 9-2 13-12 7-12-6z" fill="#c8c8c8" stroke="#444"/><path d="M9 14l8-6 9 6-8 5z" fill="#7a8f9b"/><path d="M6 18l8-2 6 6-3 8-9-4z" fill="#f1ead9" stroke="#444"/><path d="M5 26l8 5 4-3" fill="none" stroke="#e11"/></symbol>
<symbol id="d18" viewBox="0 0 34 34"><path d="M3 15l12-11 5 5-12 11zM18 3l11 6-8 10-5-5zM3 20l9-4 5 5-5 10-8-6zM18 19l12-6 1 9-10 9-5-5z" fill="#efe2c8" stroke="#1a4de0" stroke-width="1.600"/></symbol>
<symbol id="d19" viewBox="0 0 34 34"><path d="M3 3h17v16H3z" fill="#e9d9c2" stroke="#aaa"/><path d="M10 12h20v19H10z" fill="#f0f0f8" stroke="#777"/><path d="M16 24l9-11 3 3-10 9z" fill="#555"/><path d="M23 12l5-6 3 3-4 6z" fill="#222"/><path d="M16 24l-2 3 4-1z" fill="#e11"/></symbol>
<symbol id="d20" viewBox="0 0 34 34"><path d="M3 13l6-5 4 6 4-8 13-2v19l-6 4-8-3-5 5-8-5z" fill="#e7dcc8" stroke="#666"/><path d="M10 14v14M17 8v20M24 6v20M3 22l7-3" stroke="#666"/><path d="M4 18l6-1v8l-6 2z" fill="#e66"/></symbol>
<symbol id="d21" viewBox="0 0 34 34"><path d="M2 20h30" stroke="#f44"/><path d="M17 4v10" stroke="#2a2" stroke-width="1.500"/><path d="M27 2l-7 13" stroke="#111" stroke-width="2"/><circle cx="17" cy="20" r="7" fill="#e5c9a0" stroke="#a55"/><text x="14" y="24" class="ts" fill="#d11">N</text><path d="M17 27v6" stroke="#2a2"/></symbol>
<symbol id="d22" viewBox="0 0 34 34"><path d="M2 31L31 5" stroke="#e11" stroke-width="1.300"/><path d="M7 22l15-12 5 5-13 13c-4 2-9-2-7-6z" fill="#bbb" stroke="#444"/><path d="M10 20l10-8" stroke="#444"/><circle cx="30" cy="6" r="1.700" fill="#e11"/><circle cx="3" cy="30" r="1.700" fill="#e11"/></symbol>
<symbol id="rb" viewBox="0 0 34 34"><text x="1" y="26" class="trb">RB</text></symbol>
<symbol id="su" viewBox="0 0 34 34"><path d="M5 9l21-6 4 6-1 18-18 4-6-8z" fill="#d01028"/><path d="M7 22c5-7 13-7 18-3M11 26c3-3 8-3 11-1M9 13l17-4" fill="none" stroke="#fff" stroke-width="2"/></symbol>
<symbol id="sa" viewBox="0 0 34 34"><text x="17" y="17" class="tsu" text-anchor="middle">SU</text><text x="17" y="30" class="tap" text-anchor="middle">APP</text></symbol>
<symbol id="stkb" viewBox="0 0 34 34"><path d="M3 18l14-7 14 7-14 7z" fill="#f2e9d2" stroke="#111"/><path d="M3 22l14 7 14-7M3 26l14 7 14-7" fill="none" stroke="#111" stroke-width="1.500"/></symbol>
<symbol id="s1" viewBox="0 0 34 34"><use href="#stkb"/><path d="M9 11l14-7 6 6-14 8z" fill="#fff" stroke="#111"/><text x="12" y="15" class="ts2" fill="#e11">S</text></symbol>
<symbol id="s2" viewBox="0 0 34 34"><use href="#stkb"/><path d="M9 11l14-7 6 6-14 8z" fill="#2a62d8" stroke="#111"/><path d="M13 13l10-6M16 14l10-6" stroke="#fff" stroke-dasharray="2 1"/></symbol>
<symbol id="s3" viewBox="0 0 34 34"><use href="#stkb"/><path d="M9 12l14-9 6 6-14 9z" fill="#fff" stroke="#e11" stroke-width="2.200"/><text x="14" y="15" class="ts2" fill="#e11">?</text></symbol>
<symbol id="s4" viewBox="0 0 34 34"><path d="M3 17l14-10 14 8-14 12z" fill="#2a62d8" stroke="#e11"/><path d="M3 23l14 8 14-8" fill="none" stroke="#12c" stroke-width="2"/><path d="M9 15l8-6 8 6-8 5z" fill="#e11"/><path d="M13 14l4-2 4 2-4 3z" fill="#fff"/></symbol>
<symbol id="dr" viewBox="0 0 34 34"><path d="M3 17h28M17 4l9 13-9 13-9-13z" fill="none" stroke="#222"/><path d="M3 17l4-3v6zM31 17l-4-3v6zM17 4l-3 4h6zM17 30l-3-4h6z"/></symbol>
<symbol id="h1" viewBox="0 0 34 34"><path d="M4 12l13-8 13 8v13l-13 7-13-7z" fill="#8fb6dc" stroke="#4a86c5" stroke-width="1.300"/><path d="M9 15l8-5 8 5-8 5z" fill="#555"/><path d="M10 17l7 4v8l-7-4zM24 17l-7 4v8l7-4z" fill="#eee" stroke="#666"/></symbol>
<symbol id="h2" viewBox="0 0 34 34"><path d="M3 12l9-7 9 7v13H3z" fill="#888" stroke="#333"/><path d="M8 20h8v10H8z" fill="#fff" stroke="#333"/><path d="M17 26l7-7 7 5-5 8z" fill="#1b87dc"/><path d="M24 14l6-5v14l-6 2z" fill="#555"/></symbol>
<!-- row 3 end -->
<symbol id="e1" viewBox="0 0 34 34"><path d="M9 11l7 4 1-5 4 5 3-2 2 5 2 8c-3 3-6 3-8 1l-6-5-8-1 5-2 2-1z" fill="#fff" stroke="#222"/></symbol>
<symbol id="e2" viewBox="0 0 34 34"><path d="M3 16l14-7 10 6-3 16-11 0z" fill="#f0e0e0" stroke="#f33" stroke-width="1.200"/><path d="M8 15l8-4 8 5-7 5zM9 18l8 4v6l-7-4z" fill="#666" stroke="#222"/><rect x="18" y="3" width="14" height="5" fill="#d11"/><rect x="22" y="9" width="9" height="18" fill="#f5f5f5" stroke="#888"/><path d="M24 13h5M24 17h5M24 21h5" stroke="#333" stroke-width="1.500"/></symbol>
<symbol id="e3" viewBox="0 0 34 34"><path d="M2 13l14-8 13 6-1 16-13 5-11-6z" fill="#f3e4e4" stroke="#f33" stroke-width="1.200"/><path d="M7 12l9-4 8 5-9 5zM8 15l7 4v8l-7-4z" fill="#666" stroke="#222"/><path d="M17 22h9v-5l7 7-7 7v-5h-9z" fill="#129a2a" stroke="#060"/><rect x="17" y="15" width="5" height="4" fill="#2a2"/></symbol>
<symbol id="e4" viewBox="0 0 34 34"><path d="M3 14l14-8 13 6-13 8z" fill="#eee" stroke="#bbb"/><path d="M3 14v12l14 6V20zM30 12v12l-13 8V20z" fill="#ddd" stroke="#bbb"/><path d="M20 22v-8h-4l9-7 8 7h-4v8z" fill="#bbb"/></symbol>
<symbol id="e5" viewBox="0 0 34 34"><path d="M2 13l13-9 15 6-1 16-14 6-13-8z" fill="#888" stroke="#222"/><path d="M6 13l9-6 11 4-7 10z" fill="#fff" stroke="#222"/><path d="M9 12l6-5h8l5 5-10 10z" fill="#c9102a" stroke="#500"/><path d="M2 22l12 6 15-6" fill="none" stroke="#222" stroke-width="2"/></symbol>
<symbol id="e6" viewBox="0 0 34 34"><path d="M3 22C3 11 15 3 31 2l-3 12c-7 0-12 3-14 11l-2 6z" fill="#e5e5e5" stroke="#222" stroke-width="1.300"/><path d="M7 22c2-7 8-13 22-15M3 22l9 9" stroke="#888" fill="none"/><path d="M12 31l19-17-11-1z" fill="#f6f6f6" stroke="#e99"/></symbol>
<symbol id="e7" viewBox="0 0 34 34"><path d="M9 5h14c5 4 5 15 1 21l-8 5c-3-1-6-6-9-8-3-5-2-13 2-18z" fill="#fff" stroke="#222" stroke-width="1.500"/><path d="M14 7c3 5-2 6 2 11s-2 6 0 10M22 7c-2 4 2 8 0 13" fill="none" stroke="#333"/></symbol>
<symbol id="e8" viewBox="0 0 34 34"><path d="M8 24V15C8 8 12 6 15 6c4 0 6 4 6 9v9" fill="none" stroke="#f66" stroke-width="2"/><rect x="2" y="15" width="11" height="9" fill="#1a8b5a" stroke="#063"/><circle cx="25" cy="25" r="5" fill="#f0a800" stroke="#333"/></symbol>
<symbol id="e9" viewBox="0 0 34 34"><path d="M15 2l12 11 3 12-8 6H8l-5-6 1-11 6-2z" fill="#fff" stroke="#2a2" stroke-width="1.300"/><path d="M10 12l5 7-1 10M15 19l12-4M21 6l-3 14 6 9M4 24l10 0M27 14l2 10-6 0" fill="none" stroke="#2a2" stroke-width="1.300"/></symbol>
<!-- row 4 cubes etc. -->
<symbol id="f1" viewBox="0 0 34 34"><path d="M3 14L17 5l12 10 3 8-10 10-13-2z" fill="#7f9db8" stroke="#223"/><path d="M3 14l13 4 6 15M16 18l15 3" stroke="#345" fill="none"/></symbol>
<symbol id="f2" viewBox="0 0 34 34"><path d="M4 14L18 5l10 10 3 8-10 9-13-2z" fill="#f7f7f7" stroke="#888"/><path d="M4 14l13 4 4 14M17 18l14 5M18 5l-6 9" stroke="#bbb" fill="none"/></symbol>
<symbol id="f3" viewBox="0 0 34 34"><path d="M3 14L18 5l13 9-3 8-12 8-10-7z" fill="none" stroke="#111" stroke-width="1.100"/><path d="M3 14l12 5 16-5M15 19v11M3 23l16-9 9 8" fill="none" stroke="#111"/></symbol>
<symbol id="f4" viewBox="0 0 34 34"><path d="M3 13L18 5l13 9-6 14-8 3-10-8z" fill="#fff" stroke="#111" stroke-width="1.200"/><path d="M3 13l13 5 15-4M16 18l1 13" fill="none" stroke="#bbb"/></symbol>
<symbol id="f5" viewBox="0 0 34 34"><path d="M3 13L18 5l13 9-6 14-8 3-10-8z" fill="#a3a28f" stroke="#555"/><path d="M3 13l13 5 1 13-10-8z" fill="#77766a"/></symbol>
<symbol id="f6" viewBox="0 0 34 34"><path d="M3 13L18 5l13 9-6 14-8 3-10-8z" fill="#fff" stroke="#111"/><path d="M3 13L18 5l2 5-14 7zM5 19l15-8 6 4-19 8zM8 24l18-8-2 11-7 4z" fill="#111"/></symbol>
<symbol id="f7" viewBox="0 0 34 34"><path d="M3 13l13 5 2-13 13 9z" fill="#1e90e8"/><path d="M3 13l13 5 15-4-6 14-8 3-10-8z" fill="#a3a28f" stroke="#555"/><path d="M3 13L18 5" stroke="#555"/></symbol>
<symbol id="g1" viewBox="0 0 34 34"><path d="M3 17L15 6l3 2V3h3v6l11 7-6 2v11L14 31l-7-3V19z" fill="#fff" stroke="#333"/><path d="M3 17L15 6l17 10-17 4z" fill="#888" stroke="#333"/><path d="M8 21h6v9H8z" fill="#999" stroke="#333"/></symbol>
<symbol id="g2" viewBox="0 0 34 34"><path d="M5 6l14-3 10 1v25l-10 3-14-3z" fill="#a3a28f" stroke="#555"/><path d="M19 3v29" stroke="#555"/><rect x="22" y="8" width="4" height="8" fill="#fff" stroke="#555"/></symbol>
<symbol id="g3" viewBox="0 0 34 34"><path d="M4 18L17 6l13 12h-4v12H8V18z" fill="#fff" stroke="#000" stroke-width="2.400"/><rect x="13" y="19" width="8" height="11" fill="#111"/></symbol>
<symbol id="g4" viewBox="0 0 34 34"><rect x="7" y="17" width="20" height="13" fill="#fff" stroke="#222" stroke-width="1.300"/><path d="M3 17l4-7h20l4 7z" fill="#888" stroke="#222" stroke-width="1.300"/><rect x="13" y="4" width="8" height="8" fill="#fff" stroke="#222"/></symbol>
<symbol id="g5" viewBox="0 0 34 34"><path d="M5 17L17 5l13 12h-4v13H8V17z" fill="#fff" stroke="#000" stroke-width="2.200"/><path d="M10 9V3h2" stroke="#555" stroke-width="2"/></symbol>
<symbol id="g6" viewBox="0 0 34 34"><rect x="7" y="17" width="20" height="13" fill="#fff" stroke="#222" stroke-width="1.300"/><path d="M3 17l3-8h22l3 8z" fill="#888" stroke="#222" stroke-width="1.300"/><rect x="10" y="7" width="10" height="3" fill="#888"/></symbol>
<symbol id="j1" viewBox="0 0 34 34"><path d="M3 11l12-4 9 6v12l-12 4-9-5z" fill="#6f6e60" stroke="#333"/><path d="M15 15l12-3 5 6-2 10-11 3-7-6z" fill="#5c5b50" stroke="#333"/></symbol>
<symbol id="j2" viewBox="0 0 34 34"><path d="M6 7h13v12l-13 6zM15 14h13v12l-13 5z" fill="#fff" stroke="#333"/><path d="M6 7l8-3 12 2-7 1zM15 20l13-2" stroke="#333" fill="none"/></symbol>
<symbol id="j3" viewBox="0 0 34 34"><path d="M7 8h14v14H7z" fill="#555" stroke="#111"/><path d="M13 14h15v13H13z" fill="#666" stroke="#111"/><path d="M7 14h6M21 8l6 6" stroke="#fff"/></symbol>
<symbol id="j4" viewBox="0 0 34 34"><path d="M6 9h12v14H6z" fill="#fff" stroke="#222"/><path d="M14 15h14v12H14z" fill="#555" stroke="#111"/><path d="M18 9l8 6" stroke="#222"/></symbol>
<symbol id="j5" viewBox="0 0 34 34"><path d="M5 9h14v12H5z" fill="#555" stroke="#111"/><path d="M12 16h17v11H12z" fill="#2a62d8" stroke="#111"/></symbol>
<symbol id="us" viewBox="0 0 34 34"><circle cx="17" cy="17" r="13" fill="#fff" stroke="#334" stroke-width="1.200"/><circle cx="17" cy="13" r="5" fill="none" stroke="#334" stroke-width="1.200"/><path d="M8 27c0-6 4-9 9-9s9 3 9 9" fill="none" stroke="#334" stroke-width="1.200"/></symbol>
</svg>

<div class="app">
  <header class="title">
    <svg class="logo" viewBox="0 0 16 16"><path d="M2 4l9-3 3 2-1 10-6 2-5-3z" fill="#e2231a"/><path d="M4 9l3-4h5M5 11l4-3 3 0" stroke="#fff" stroke-width="1.300" fill="none"/></svg>
    <span class="ttext">无标题 - SketchUp Pro 2020</span>
    <div class="wctl">
      <svg class="wb" viewBox="0 0 46 20"><path d="M18 10h10" stroke="#000"/></svg>
      <svg class="wb" viewBox="0 0 46 20"><path d="M18.500 8.500h7v7h-7zM21 8.500v-3h7v7h-2.500" fill="none" stroke="#000"/></svg>
      <svg class="wb" viewBox="0 0 46 20"><path d="M18 5l10 10M28 5L18 15" stroke="#000"/></svg>
    </div>
  </header>
  <nav class="menubar">
    <span class="mi m1">文件(F)</span><span class="mi">编辑(E)</span><span class="mi">视图(V)</span><span class="mi">相机(C)</span><span class="mi">绘图(R)</span><span class="mi">工具(T)</span><span class="mi">窗口(W)</span><span class="mi on">扩展程序 (x)</span><span class="mi">帮助(H)</span>
  </nav>

  <div class="row first">
    <div class="tb r1"><i class="g w9"></i>
      <svg class="ic"><use href="#a1"/></svg><svg class="ic"><use href="#a2"/></svg><svg class="ic"><use href="#a3"/></svg><svg class="ic"><use href="#a4"/></svg><svg class="ic"><use href="#a5"/></svg><svg class="ic"><use href="#a6"/></svg><svg class="ic"><use href="#a7"/></svg><svg class="ic"><use href="#a8"/></svg><svg class="ic"><use href="#a9"/></svg>
      <i class="e"></i><i class="e"></i><i class="e"></i><i class="e"></i><i class="e"></i>
      <svg class="ic"><use href="#c1"/></svg><svg class="ic"><use href="#c2"/></svg><svg class="ic"><use href="#c3"/></svg><svg class="ic"><use href="#c4"/></svg><svg class="ic"><use href="#c5"/></svg><svg class="ic"><use href="#c6"/></svg><svg class="ic"><use href="#c7"/></svg><svg class="ic"><use href="#c8"/></svg><svg class="ic"><use href="#c9"/></svg><svg class="ic"><use href="#c10"/></svg><svg class="ic"><use href="#c11"/></svg><svg class="ic"><use href="#c12"/></svg><svg class="ic"><use href="#c13"/></svg><svg class="ic"><use href="#c14"/></svg><svg class="ic"><use href="#c15"/></svg><svg class="ic"><use href="#c16"/></svg><svg class="ic"><use href="#c17"/></svg><svg class="ic"><use href="#c18"/></svg><svg class="ic"><use href="#c19"/></svg><svg class="ic"><use href="#c20"/></svg><svg class="ic"><use href="#c21"/></svg><svg class="ic"><use href="#c22"/></svg><svg class="ic"><use href="#c23"/></svg><svg class="ic"><use href="#c24"/></svg><svg class="ic"><use href="#c25"/></svg>
    </div>
  </div>

  <div class="row">
    <div class="tb pr3"><i class="g w10"></i>
      <svg class="ic"><use href="#b1"/></svg><svg class="ic"><use href="#b2"/></svg><svg class="ic"><use href="#b3"/></svg><svg class="ic"><use href="#b4"/></svg><svg class="ic"><use href="#b5"/></svg><svg class="ic"><use href="#b6"/></svg><svg class="ic"><use href="#b7"/></svg><svg class="ic"><use href="#b8"/></svg><svg class="ic"><use href="#b9"/></svg><svg class="ic"><use href="#b10"/></svg><svg class="ic"><use href="#b11"/></svg>
      <i class="e"></i><i class="e"></i><i class="e"></i><i class="e"></i><i class="s7"></i>
      <svg class="ic"><use href="#b6"/></svg><svg class="ic"><use href="#b12"/></svg><svg class="ic"><use href="#b13"/></svg>
    </div>
    <div class="tb"><i class="g w9"></i>
      <svg class="ic"><use href="#pt"/></svg><i class="sep w"></i>
      <svg class="ic"><use href="#p0"/></svg><svg class="ic"><use href="#pj"/></svg><svg class="ic"><use href="#pr"/></svg><svg class="ic"><use href="#pv"/></svg><svg class="ic"><use href="#pn"/></svg><svg class="ic"><use href="#px"/></svg><svg class="ic"><use href="#pf"/></svg>
    </div>
    <div class="tb"><i class="g w12"></i><svg class="ic"><use href="#tr"/></svg></div>
  </div>

  <div class="row">
    <div class="tb"><i class="g w10"></i>
      <svg class="ic"><use href="#ob"/></svg><svg class="ic"><use href="#zo"/></svg><svg class="ic"><use href="#zw"/></svg><svg class="ic"><use href="#ze"/></svg><svg class="ic"><use href="#zp"/></svg><svg class="ic"><use href="#ha"/></svg><svg class="ic"><use href="#pe"/></svg><svg class="ic"><use href="#ey"/></svg><svg class="ic"><use href="#fe"/></svg>
    </div>
    <div class="tb pr1"><i class="g w11"></i>
      <svg class="ic"><use href="#d1"/></svg><svg class="ic"><use href="#d2"/></svg><i class="e"></i><i class="e"></i><i class="e"></i><i class="e"></i><svg class="ic"><use href="#d3"/></svg><i class="sep w"></i>
      <svg class="ic"><use href="#d4"/></svg><svg class="ic"><use href="#d5"/></svg><svg class="ic"><use href="#d6"/></svg><svg class="ic"><use href="#d7"/></svg><svg class="ic"><use href="#d8"/></svg><svg class="ic"><use href="#d9"/></svg><svg class="ic"><use href="#d10"/></svg><svg class="ic"><use href="#d11"/></svg><svg class="ic"><use href="#d12"/></svg><i class="sep"></i>
      <svg class="ic"><use href="#d13"/></svg><svg class="ic"><use href="#d14"/></svg><svg class="ic"><use href="#d15"/></svg><svg class="ic"><use href="#d16"/></svg><svg class="ic"><use href="#d17"/></svg><svg class="ic"><use href="#d18"/></svg><svg class="ic"><use href="#d19"/></svg><svg class="ic"><use href="#d20"/></svg><svg class="ic"><use href="#d21"/></svg><svg class="ic"><use href="#d22"/></svg><i class="sep w"></i>
      <svg class="ic"><use href="#rb"/></svg><svg class="ic hl"><use href="#su"/></svg><svg class="ic"><use href="#sa"/></svg>
    </div>
    <div class="tb pr2"><i class="g w10"></i>
      <svg class="ic"><use href="#s1"/></svg><svg class="ic"><use href="#s2"/></svg><svg class="ic"><use href="#s3"/></svg><svg class="ic"><use href="#s4"/></svg><i class="sep x12"></i>
      <svg class="ic"><use href="#dr"/></svg><svg class="ic"><use href="#h1"/></svg><svg class="ic hl"><use href="#h2"/></svg><svg class="ic hl"><use href="#h1"/></svg>
    </div>
    <div class="tb"><i class="g w12"></i><svg class="ic"><use href="#e1"/></svg><svg class="ic"><use href="#e2"/></svg><svg class="ic"><use href="#e3"/></svg></div>
  </div>

  <div class="row">
    <div class="tb pr5"><i class="g w11"></i>
      <svg class="ic"><use href="#sel"/></svg><i class="sep n"></i><svg class="ic"><use href="#era"/></svg>
      <div class="hlg"><svg class="ic w40"><use href="#pen"/></svg><span class="dr lit"></span></div>
      <svg class="ic m3"><use href="#ar"/></svg><span class="dr"></span>
      <svg class="ic m5"><use href="#re"/></svg><span class="dr"></span><i class="sep x12"></i>
      <svg class="ic"><use href="#pp"/></svg><svg class="ic"><use href="#fo"/></svg><svg class="ic"><use href="#mo"/></svg><svg class="ic"><use href="#ro"/></svg><i class="e"></i><i class="e"></i><i class="e"></i><i class="e"></i><i class="s16"></i>
      <svg class="ic"><use href="#ob"/></svg><svg class="ic"><use href="#ha"/></svg><svg class="ic"><use href="#zo"/></svg><svg class="ic"><use href="#ze"/></svg><i class="sep w"></i>
      <svg class="ic"><use href="#w1"/></svg><svg class="ic"><use href="#w2"/></svg><svg class="ic"><use href="#w3"/></svg><i class="sep n"></i>
      <svg class="ic"><use href="#w4"/></svg><i class="sep x11"></i>
      <svg class="ic"><use href="#us"/></svg><span class="dr"></span>
    </div>
    <div class="tb pr2"><i class="g w10"></i>
      <svg class="ic"><use href="#f1"/></svg><svg class="ic"><use href="#f2"/></svg><i class="sep w"></i>
      <svg class="ic"><use href="#f3"/></svg><svg class="ic"><use href="#f4"/></svg><svg class="ic"><use href="#f5"/></svg><svg class="ic hl"><use href="#f6"/></svg><svg class="ic"><use href="#f7"/></svg>
    </div>
    <div class="tb pr3"><i class="g w9"></i>
      <svg class="ic"><use href="#g1"/></svg><svg class="ic"><use href="#g2"/></svg><svg class="ic"><use href="#g3"/></svg><svg class="ic"><use href="#g4"/></svg><svg class="ic"><use href="#g5"/></svg><svg class="ic"><use href="#g6"/></svg>
    </div>
    <div class="tb pr3"><i class="g w10"></i>
      <svg class="ic"><use href="#j1"/></svg><i class="sep"></i>
      <svg class="ic"><use href="#j2"/></svg><svg class="ic"><use href="#j3"/></svg><svg class="ic"><use href="#j4"/></svg><svg class="ic"><use href="#j5"/></svg><i class="sep x11"></i>
      <svg class="ic"><use href="#w1"/></svg><svg class="ic"><use href="#e3"/></svg><svg class="ic"><use href="#e4"/></svg><svg class="ic"><use href="#e5"/></svg>
    </div>
    <div class="tb pr2"><i class="g w10"></i><svg class="ic"><use href="#e6"/></svg></div>
    <div class="tb pr1"><i class="g w11"></i><svg class="ic"><use href="#e7"/></svg><svg class="ic"><use href="#e8"/></svg><svg class="ic"><use href="#e9"/></svg></div>
  </div>

  <main class="main">
    <aside class="left">
      <div class="lbar">
        <i class="hg"></i>
        <div class="lg"><svg class="ic"><use href="#sel"/></svg><svg class="ic"><use href="#gh"/></svg><svg class="ic"><use href="#pa"/></svg><svg class="ic"><use href="#era"/></svg></div>
        <i class="ls l9"></i>
        <div class="lg"><svg class="ic hl"><use href="#pen"/></svg><svg class="ic"><use href="#fr"/></svg><svg class="ic"><use href="#re"/></svg><svg class="ic"><use href="#rr"/></svg><svg class="ic"><use href="#ci"/></svg><svg class="ic"><use href="#po"/></svg><svg class="ic"><use href="#ar"/></svg><svg class="ic"><use href="#a2s"/></svg><svg class="ic"><use href="#a3s"/></svg><svg class="ic"><use href="#pi"/></svg></div>
        <i class="ls"></i>
        <div class="lg"><svg class="ic"><use href="#mo"/></svg><svg class="ic"><use href="#pp"/></svg><svg class="ic"><use href="#ro"/></svg><svg class="ic"><use href="#of"/></svg><svg class="ic"><use href="#sc"/></svg><svg class="ic"><use href="#fo"/></svg></div>
        <i class="ls l6"></i>
        <div class="lg"><svg class="ic"><use href="#ta"/></svg><svg class="ic"><use href="#cn"/></svg><svg class="ic"><use href="#pc"/></svg><svg class="ic"><use href="#tx"/></svg><svg class="ic"><use href="#ax"/></svg><svg class="ic"><use href="#t3"/></svg></div>
        <i class="ls l10"></i>
        <div class="lg"><svg class="ic"><use href="#ob"/></svg><svg class="ic"><use href="#ha"/></svg><svg class="ic"><use href="#zo"/></svg><svg class="ic"><use href="#zw"/></svg><svg class="ic"><use href="#ze"/></svg><svg class="ic"><use href="#zp"/></svg></div>
        <i class="ls l7"></i>
        <div class="lg"><svg class="ic"><use href="#pe"/></svg><svg class="ic"><use href="#ey"/></svg><svg class="ic"><use href="#fe"/></svg><svg class="ic"><use href="#pos"/></svg></div>
        <i class="ls"></i>
        <div class="lg"><svg class="ic"><use href="#w1"/></svg><svg class="ic"><use href="#w2"/></svg><svg class="ic"><use href="#w3"/></svg><svg class="ic"><use href="#w4"/></svg></div>
      </div>
    </aside>
    <section class="vp">
      <svg class="scene" viewBox="74 196 1561 816" preserveAspectRatio="none">
        <path d="M74 490L948 749" class="dotr"/>
        <path d="M74 893L948 749" class="dotg"/>
        <path d="M949 752L946 1012" class="dotb"/>
        <path d="M953 196L950 749" class="solb"/>
        <path d="M1159 714L1635 636" class="solg"/>
        <path d="M951 451H1166L1157 756 1043 777 948 749z" fill="#fff"/>
        <path d="M951 451H1048L1043 777 948 749z" fill="#d9d9d9"/>
        <path d="M1048 451L1043 777" class="edge1"/>
        <path d="M951 451H1166L1157 756 1043 777 948 749z" class="edge2"/>
        <path d="M952 451L949 749" class="solb"/>
        <path d="M948 749L1635 955" class="solr"/>
      </svg>
    </section>
    <aside class="panel">
      <div class="ptitle"><span class="ptext">baidujingyan</span>
        <svg class="pin" viewBox="0 0 12 12"><path d="M3 1h6v1H8v5h2v1H6.500v3h-1V8H2V7h2V2H3z"/></svg>
        <span class="pclose">x</span></div>
      <div class="prow"><i class="tri"></i><span>组件</span><b class="px">x</b></div>
      <div class="prow"><i class="tri"></i><span>样式</span><b class="px">x</b></div>
      <div class="prow"><i class="tri"></i><span>标记</span><b class="px">x</b></div>
      <div class="prow"><i class="tri"></i><span>阴影</span><b class="px">x</b></div>
      <div class="prow"><i class="tri"></i><span>场景</span><b class="px">x</b></div>
      <div class="prow"><i class="tri"></i><span>工具向导</span><b class="px">x</b></div>
      <div class="prow"><i class="tri"></i><span>柔化边线</span><b class="px">x</b></div>
      <div class="prow"><i class="tri"></i><span>照片匹配</span><b class="px">x</b></div>
    </aside>
  </main>

  <footer class="status">
    <svg class="si off" viewBox="0 0 16 16"><circle cx="8" cy="8" r="6.500" fill="none" stroke="#999"/><path d="M5 6a3 3 0 0 1 6 0c0 2-2 3-2 5H7c0-2-2-3-2-5z" fill="#999"/></svg>
    <svg class="si on2" viewBox="0 0 16 16"><circle cx="8" cy="8" r="6.500" fill="none" stroke="#111" stroke-width="1.300"/><circle cx="8" cy="4.500" r="1.200"/><path d="M7 7h2v5H7z"/></svg>
    <i class="bar"></i>
    <span class="len"><i class="bar2"></i>长度</span>
  </footer>

  <div class="taskbar">
    <span class="tk"><svg class="ti" viewBox="0 0 20 20"><path d="M1 3.500l7.500-1v7H1zM9.500 2.300L19 1v8.500H9.500zM1 10.500h7.500v7l-7.500-1zM9.500 10.500H19V19l-9.500-1.300z"/></svg></span>
    <span class="tk"><svg class="ti" viewBox="0 0 20 20"><circle cx="12" cy="7.500" r="5.500" fill="none" stroke="#111" stroke-width="1.300"/><path d="M8 12l-6 6" stroke="#111" stroke-width="1.500"/></svg></span>
    <span class="tk"><svg class="ti" viewBox="0 0 20 20"><circle cx="10" cy="10" r="6.500" fill="none" stroke="#111" stroke-width="2.400"/></svg></span>
    <span class="tk ml3"><span class="ps">Ps</span></span>
    <span class="tk"><svg class="ti big" viewBox="0 0 24 24"><path d="M3 13c0-6 4-9 9-9 4 0 6 3 6 6 0 4-3 6-6 6 4 1 8 0 11-3-2 6-7 9-12 9-5 0-8-4-8-9z" fill="#f5a623"/><path d="M8 12c0-3 2-5 5-5s3 4 1 5c-1 1-3 1-3-1" fill="none" stroke="#fff" stroke-width="1.500"/></svg></span>
    <span class="tk u ml1"><svg class="ti big" viewBox="0 0 24 24"><circle cx="12" cy="13" r="10" fill="#5cb531"/><circle cx="12" cy="13" r="7" fill="#fff"/><path d="M7 13h10c0-3-2-5-5-5s-5 2-5 5c0 3 2 5 5 5 2 0 3-1 4-2" fill="none" stroke="#3f9a1a" stroke-width="2.200"/><path d="M4 21C8 8 16 3 23 2c-2 1-3 2-4 3" fill="none" stroke="#3f9a1a" stroke-width="1.300"/></svg></span>
    <span class="tk u ml2"><svg class="ti big" viewBox="0 0 24 24"><circle cx="12" cy="12" r="11" fill="#e04030"/><path d="M12 12L2.500 6.500A11 11 0 0 0 10 23z" fill="#2f9f48"/><path d="M12 12l-2 11A11 11 0 0 0 23 12 11 11 0 0 0 21.500 6.500z" fill="#fcc934"/><circle cx="12" cy="12" r="5.200" fill="#4285f4" stroke="#fff" stroke-width="1.600"/></svg></span>
    <span class="tk u act ml1"><svg class="ti big" viewBox="0 0 24 24"><path d="M2 6l16-4 5 4-2 14-13 3-5-5z" fill="#e2231a"/><path d="M6 13l5-6h8M8 17l6-5h5" stroke="#fff" stroke-width="2" fill="none"/></svg></span>
    <span class="tk u2 ml1"><svg class="ti big" viewBox="0 0 24 24"><path d="M1 5l4-3h6v3h12v6H1z" fill="#5ab4ec"/><rect x="1" y="11" width="22" height="3" fill="#7fb33c"/><rect x="1" y="14" width="22" height="4" fill="#f2a01e"/><rect x="1" y="18" width="22" height="4" fill="#78b43c"/><rect x="9" y="1" width="6" height="22" fill="#8a5526"/><rect x="8" y="13" width="8" height="5" fill="none" stroke="#f3d14b" stroke-width="1.300"/></svg></span>
    <div class="tray">
      <svg class="t24" viewBox="0 0 24 20"><path d="M7 13l5-5 5 5" fill="none" stroke="#111" stroke-width="1.200"/></svg>
      <span class="t24 zh">中</span>
      <span class="t32"><i class="sg">S</i></span>
      <div class="clock"><span>16:20</span><span>2021/5/5</span></div>
      <span class="t34"><svg class="chat" viewBox="0 0 30 30"><path d="M4 4h18v12H12l-4 4v-4H4z"/><path d="M8 7h10M8 10h10M8 13h7" stroke="#fff"/><circle cx="21" cy="19" r="7" fill="#d8d8d8" stroke="#333"/><text x="21" y="23" class="tn">2</text></svg></span>
    </div>
  </div>
</div>

<div class="menu">
  <i class="msep"></i>
  <div class="it sub">1001bit tools</div><div class="it sub">Flowify</div><div class="it sub">切片机5...</div><div class="it">SUAPP 1.71</div>
  <i class="msep"></i>
  <div class="it sub">轴网墙体(0)</div><div class="it sub">门窗构件(1)</div><div class="it sub">建筑设施(2)</div><div class="it sub">房间屋顶(3)</div><div class="it sub hi">文字标注(4)</div><div class="it sub">线面工具(5)</div><div class="it sub">辅助工具(6)</div><div class="it sub">图层群组(7)</div><div class="it sub">三维体量(8)</div><div class="it sub">渲染动画(9)</div>
  <i class="msep"></i>
  <div class="it">更多高级插件...</div><div class="it">获取升级授权...</div>
  <i class="msep"></i>
  <div class="it">SUAPP Pro</div>
  <i class="msep"></i>
  <div class="it">SUAPP资讯</div><div class="it sub">SUAPP设置</div>
</div>
<div class="submenu">
  <div class="it hi">高度标注</div><div class="it">角度标注</div><div class="it">导入文本</div><div class="it">文字替换</div><div class="it">标记线头</div><div class="it">选择线头</div><div class="it">连注数字</div><div class="it">分文字层</div>
</div>

<svg class="arrows" viewBox="0 0 1920 1080">
  <path d="M330 684L392 266 387 268 395 247 404 270 399 267 333 685z" fill="#ee1c25"/>
  <path d="M1166 451L648 263 643 265 632 251 652 248 649 252 1166 449z" fill="#ee1c25"/>
</svg>

<div class="ime">
  <i class="sg big">S</i><span class="zh2">中</span><span class="punc">°,</span>
  <svg class="im first" viewBox="0 0 20 20"><circle cx="10" cy="10" r="8" fill="none" stroke="#1c78c8" stroke-width="1.500"/><path d="M6 12c2 3 6 3 8 0" fill="none" stroke="#1c78c8" stroke-width="1.300"/><circle cx="7" cy="8" r="1" fill="#1c78c8"/><circle cx="13" cy="8" r="1" fill="#1c78c8"/></svg>
  <svg class="im" viewBox="0 0 20 20"><rect x="7" y="1" width="6" height="11" rx="3" fill="#1c78c8"/><path d="M4 9c0 8 12 8 12 0M10 15v4" fill="none" stroke="#1c78c8" stroke-width="1.500"/></svg>
  <svg class="im" viewBox="0 0 20 20"><rect x="1" y="4" width="18" height="12" rx="1" fill="#1c78c8"/><path d="M3 7.500h14M3 10.500h14" stroke="#fff" stroke-dasharray="1.500 1"/><path d="M6 13.500h8" stroke="#fff"/></svg>
  <svg class="im" viewBox="0 0 20 20"><circle cx="8" cy="5" r="3.500" fill="#aab8c8"/><path d="M2 17c0-5 2-7 6-7l4 2v5z" fill="#aab8c8"/><rect x="11" y="11" width="7" height="6" fill="#fff" stroke="#1c78c8"/></svg>
  <svg class="im" viewBox="0 0 20 20"><path d="M6 2l4 2 4-2 5 4-3 3-1-1v10H5V8L4 9 1 6z" fill="#1c78c8"/></svg>
  <svg class="im" viewBox="0 0 20 20"><rect x="2" y="2" width="7" height="7" fill="#1c78c8"/><rect x="11" y="2" width="7" height="7" fill="none" stroke="#1c78c8" stroke-width="1.500"/><rect x="2" y="11" width="7" height="7" fill="#1c78c8"/><rect x="11" y="11" width="7" height="7" fill="#1c78c8"/></svg>
</div>

<div class="wm">
  <svg class="paw" viewBox="1470 880 230 110">
    <ellipse cx="1630" cy="893" rx="12" ry="16"/><ellipse cx="1659" cy="896" rx="12" ry="15"/><ellipse cx="1606" cy="917" rx="12" ry="16" transform="rotate(-10 1606 917)"/><ellipse cx="1679" cy="925" rx="12" ry="17" transform="rotate(-15 1679 925)"/>
    <path d="M1640 920c14 0 20 12 30 24 10 12 16 18 14 30-3 12-14 13-28 10-10-3-22-3-32 0-14 3-26-2-26-14 0-10 8-16 16-24 9-10 14-26 26-26z"/>
  </svg>
  <span class="wb1">Bai</span><span class="wb2">du</span><span class="wz">经验</span>
  <span class="wu">jingyan.baidu.com</span>
</div>
</body>
</html>
```
FILE: styles.css
```css
*{box-sizing:border-box}
html,body{margin:0;padding:0}
body{width:1920px;height:1080px;overflow:hidden;position:relative;background:#f0f0f0;color:#111;font:12px "Noto Sans","Noto Sans CJK SC",sans-serif}
i{font-style:normal}
.defs{display:none}
.app{display:flex;flex-direction:column;height:1080px}

.title{height:21px;background:#fff;display:flex;align-items:center;flex:none}
.logo{width:16px;height:16px;margin:0 3px 0 3px}
.ttext{font-size:12.500px;line-height:21px;padding-top:2px;letter-spacing:.08px}
.wctl{margin-left:auto;display:flex;margin-right:2px}
.wb{width:46px;height:20px}

.menubar{height:21px;background:#fff;display:flex;align-items:flex-end;flex:none}
.mi{height:19px;line-height:21px;white-space:nowrap;margin-right:15.800px}
.mi.m1{margin-left:7px;margin-right:13.400px}
.mi.on{width:80px;margin:0 7px 0 -6px;padding-left:6px;background:#cde6f7;border:1px solid #99d1ff;line-height:19px}

.row{height:38px;flex:none;display:flex;background:#efefef}
.row.first{height:39px}
.tb{display:flex;align-items:center;height:100%;background:#f2f2f2;border-right:1px solid #b4b4b4;border-bottom:1px solid #b4b4b4;padding-top:1px}
.r1{margin-left:64px;padding-right:2px}
.pr1{padding-right:1px}.pr2{padding-right:1px}.pr3{padding-right:2px}.pr5{padding-right:4px}
.g{flex:none;height:28px;background:linear-gradient(#bdbdbd 50%,transparent 0) 3px 0/2px 4px repeat-y}
.w9{width:9px}.w10{width:10px}.w11{width:11px}.w12{width:12px}
.ic{width:34px;height:34px;flex:none;display:block}
.w40{width:40px}
.e{width:34px;flex:none}
.s7{width:7px;flex:none}
.s16{width:16px;flex:none}
.sep{flex:none;width:1px;height:30px;margin:0 3px;background:#8c8c8c}
.sep.w{margin:0 4px}
.sep.n{margin:0 3px 0 2px}
.sep.x12{margin:0 5px 0 6px}
.sep.x11{margin:0 5px}
.hl{background:#c3def5;outline:1px solid #90c4f0;outline-offset:-1px}
.hlg{display:flex;align-items:center;width:56px;height:34px;margin-left:1px;background:#c3def5;border:1px solid #90c4f0}
.hlg .ic{margin-left:-1px;width:39px}
.dr{flex:none;width:16px;height:20px}
.dr::after{content:"";display:block;margin:7px auto 0;width:0;height:0;border:5px solid transparent;border-top:6px solid #000;border-bottom:0}
.dr.lit{background:#e8eef5;width:15px;height:19px}
.m3{margin-left:3px}.m5{margin-left:5px}

/* svg primitive classes */
.k{stroke:#111;stroke-width:1.100}
.k:not([fill]){fill:none}
.kd{fill:none;stroke:#222;stroke-dasharray:2 1.500}
.d{fill:#f00;stroke:#a00;stroke-width:.5}
.bl{fill:none;stroke:#2a2ac8;stroke-width:2}
.tan{fill:#a3a28f;stroke:#444;stroke-width:1}
.tl{font:bold 10px "Liberation Sans",sans-serif}
.ts{font:bold 7px "Liberation Sans",sans-serif}
.ts2{font:bold 9px "Liberation Sans",sans-serif}
.tx2{font:bold 9px "Liberation Serif",serif}
.trb{font:bold 19px "Liberation Sans",sans-serif;fill:#cfc9bb;stroke:#777;stroke-width:.6}
.tsu{font:bold 17px "Liberation Sans",sans-serif;fill:#e01018}
.tap{font:bold 11px "Liberation Sans",sans-serif;fill:#e8d9b6;stroke:#777;stroke-width:.4}
.tn{font:bold 10px "Liberation Sans",sans-serif;text-anchor:middle}

.main{flex:1;display:flex;min-height:0}
.left{width:73px;flex:none;display:flex;flex-direction:column;background:#efefef;padding-top:53px}
.lbar{background:#f2f2f2;border-bottom:1px solid #b4b4b4;border-right:1px solid #e0e0e0;padding-top:10px;height:740px}
.hg{display:block;height:2px;margin:-5px 3px 3px;background:linear-gradient(90deg,#bdbdbd 50%,transparent 0) 0 0/4px 2px repeat-x}
.lg{display:grid;grid-template-columns:34px 34px;margin-left:2px}
.ls{display:block;height:1px;margin:3px 5px 4px 4px;background:#888}
.ls.l9{margin:3px 5px 5px 4px}
.ls.l6{margin:3px 5px 2px 4px}
.ls.l10{margin:3px 5px 6px 4px}
.ls.l7{margin:3px 5px 3px 4px}

.vp{width:1562px;flex:none;background:linear-gradient(#1ea1dc 0,#b5e1f4 259px,#bdbdc2 259px);border-top:1px solid #777;border-left:1px solid #888}
.scene{display:block;width:100%;height:100%}
.dotr{fill:none;stroke:#c03040;stroke-dasharray:1.500 2.500}
.dotg{fill:none;stroke:#2a9a2a;stroke-dasharray:1.500 2.500}
.dotb{fill:none;stroke:#1414d0;stroke-dasharray:1.500 2.500}
.solb{fill:none;stroke:#1212c8;stroke-width:1.300}
.solg{fill:none;stroke:#1a9a1a;stroke-width:1.200}
.solr{fill:none;stroke:#c01020;stroke-width:1.200}
.edge1{fill:none;stroke:#000;stroke-width:1.300;shape-rendering:crispEdges}
.edge2{fill:none;stroke:#000;stroke-width:2;shape-rendering:crispEdges}

.panel{flex:1;margin-left:5px;background:#f3f6fc}
.ptitle{height:18px;margin-bottom:2px;display:flex;align-items:center;background:linear-gradient(#b9cbdf,#dbe8f4);padding-left:4px}
.ptext{letter-spacing:.4px}
.pin{width:12px;height:12px;margin-left:auto;margin-right:6px}
.pclose{width:12px;height:12px;margin-right:4px;background:#c8474f;color:#fff;font:bold 9px/11px "Liberation Sans",sans-serif;text-align:center}
.prow{height:18px;margin-bottom:1px;display:flex;align-items:center;background:linear-gradient(#e2e2e2,#a8a8a8);border-top:1px solid #c4c4c4}
.tri{width:0;height:0;margin:0 5px 0 9px;border:4px solid transparent;border-left:6px solid #000;border-right:0}
.prow span{color:#111;line-height:16px}
.px{margin-left:auto;margin-right:3px;width:13px;height:13px;background:#d9d9d9;border:1px solid #f4f4f4;outline:1px solid #aaa;outline-offset:-2px;font:bold 9px/10px "Liberation Sans",sans-serif;text-align:center;color:#222}

.status{height:28px;flex:none;background:#f0f0f0;display:flex;align-items:center;padding-left:5px}
.si{width:15px;height:15px;margin-right:15px;flex:none}
.si.off{margin-top:3px}
.si.on2{margin-right:12px}
.bar{width:1px;height:8px;background:#777}
.len{margin-left:1600px;font-size:15px;color:#000;display:flex;align-items:center}
.bar2{width:1px;height:8px;background:#777;margin-right:11px}

.taskbar{height:40px;flex:none;display:flex;background:linear-gradient(#d2d2d2,#d8d8d8)}
.tk{width:48px;height:40px;display:flex;align-items:center;justify-content:center;flex:none;border-bottom:2px solid transparent}
.ti{width:18px;height:18px}
.ti.big{width:24px;height:24px}
.ml3{margin-left:3px}.ml1{margin-left:1px}.ml2{margin-left:2px}
.tk.u{border-image:linear-gradient(90deg,transparent 10%,#0a78d4 10%,#0a78d4 90%,transparent 90%) 1}
.tk.act{background:#f1f1f1;border-image:none;border-bottom-color:#0a78d4}
.tk.u2{border-image:linear-gradient(90deg,transparent 9%,#0a78d4 9%,#0a78d4 75%,#6db2e8 75%,#6db2e8 91%,transparent 91%) 1}
.ps{width:22px;height:22px;background:#0d2a3f;border:2px solid #29b2ef;color:#a5dcf5;font:bold 13px/18px "Liberation Sans",sans-serif;text-align:center}
.tray{margin-left:auto;display:flex;align-items:center;height:40px;margin-right:16px}
.t24{width:24px;height:20px;display:block;text-align:center;line-height:20px;font-size:13px}
.t32{width:32px;display:flex;justify-content:center}
.sg{display:block;width:16px;height:15px;background:#ef5a1e;color:#fff;border-radius:3px;font:italic bold 14px/15px "Liberation Sans",sans-serif;text-align:center}
.clock{width:78px;display:flex;flex-direction:column;align-items:center;line-height:18px;font-size:12px;color:#111}
.t34{width:34px;display:flex;justify-content:center}
.chat{width:30px;height:30px}

.menu,.submenu{position:absolute;background:#f2f2f2;border:1px solid #cfcfcf;box-shadow:3px 3px 4px rgba(0,0,0,.45);color:#111;z-index:5}
.menu{left:378px;top:43px;width:171px;height:458px;padding-top:1px}
.submenu{left:544px;top:233px;width:137px;height:181px;padding-top:1px;z-index:6}
.msep{display:block;height:1px;margin:3px 2px 3px 30px;background:#d0d0d0}
.it{height:22px;line-height:22px;margin:0 2px;padding-left:32px;display:flex;align-items:center;white-space:nowrap}
.submenu .it{padding-left:32px;margin:0 1px}
.sub::after{content:"";width:5px;height:5px;margin-left:auto;margin-right:11px;border-top:1px solid #444;border-right:1px solid #444;transform:rotate(45deg)}
.hi{background:#91c9f7}

.arrows{position:absolute;left:0;top:0;width:1920px;height:1080px;z-index:7;pointer-events:none}

.ime{position:absolute;left:1716px;top:1015px;width:204px;height:25px;background:#fff;border-top:1px solid #b8bcc8;border-left:1px solid #b8bcc8;display:flex;align-items:center;z-index:3}
.sg.big{flex:none;width:26px;height:24px;font-size:22px;line-height:24px;border-radius:4px;margin-left:-2px}
.zh2{flex:none;font-size:15px;font-weight:700;color:#1c78c8;margin-left:2px;width:24px;text-align:center}
.punc{flex:none;font:bold 13px "Liberation Sans",sans-serif;color:#1c78c8;width:24px;text-align:center}
.im{width:18px;height:18px;margin-right:4px;flex:none}
.im.first{margin-left:-1px}

.wm{position:absolute;left:1470px;top:880px;width:350px;height:170px;z-index:8;pointer-events:none;color:rgba(255,255,255,.62)}
.paw{position:absolute;left:0;top:0;width:230px;height:110px;fill:rgba(255,255,255,.55)}
.wb1{position:absolute;left:5px;top:27px;font:bold 78px/90px "Liberation Sans",sans-serif;letter-spacing:1px}
.wb2{position:absolute;left:130px;top:34px;font:bold 62px/76px "Liberation Sans",sans-serif;color:rgba(160,160,168,.4)}
.wz{position:absolute;left:227px;top:34px;font:bold 57px/80px "Noto Sans CJK SC",sans-serif;color:rgba(255,255,255,.78)}
.wu{position:absolute;left:7px;top:103px;font:43px/56px "Liberation Sans",sans-serif;color:rgba(255,255,255,.55);text-shadow:0 0 2px rgba(120,120,120,.5)}
```
